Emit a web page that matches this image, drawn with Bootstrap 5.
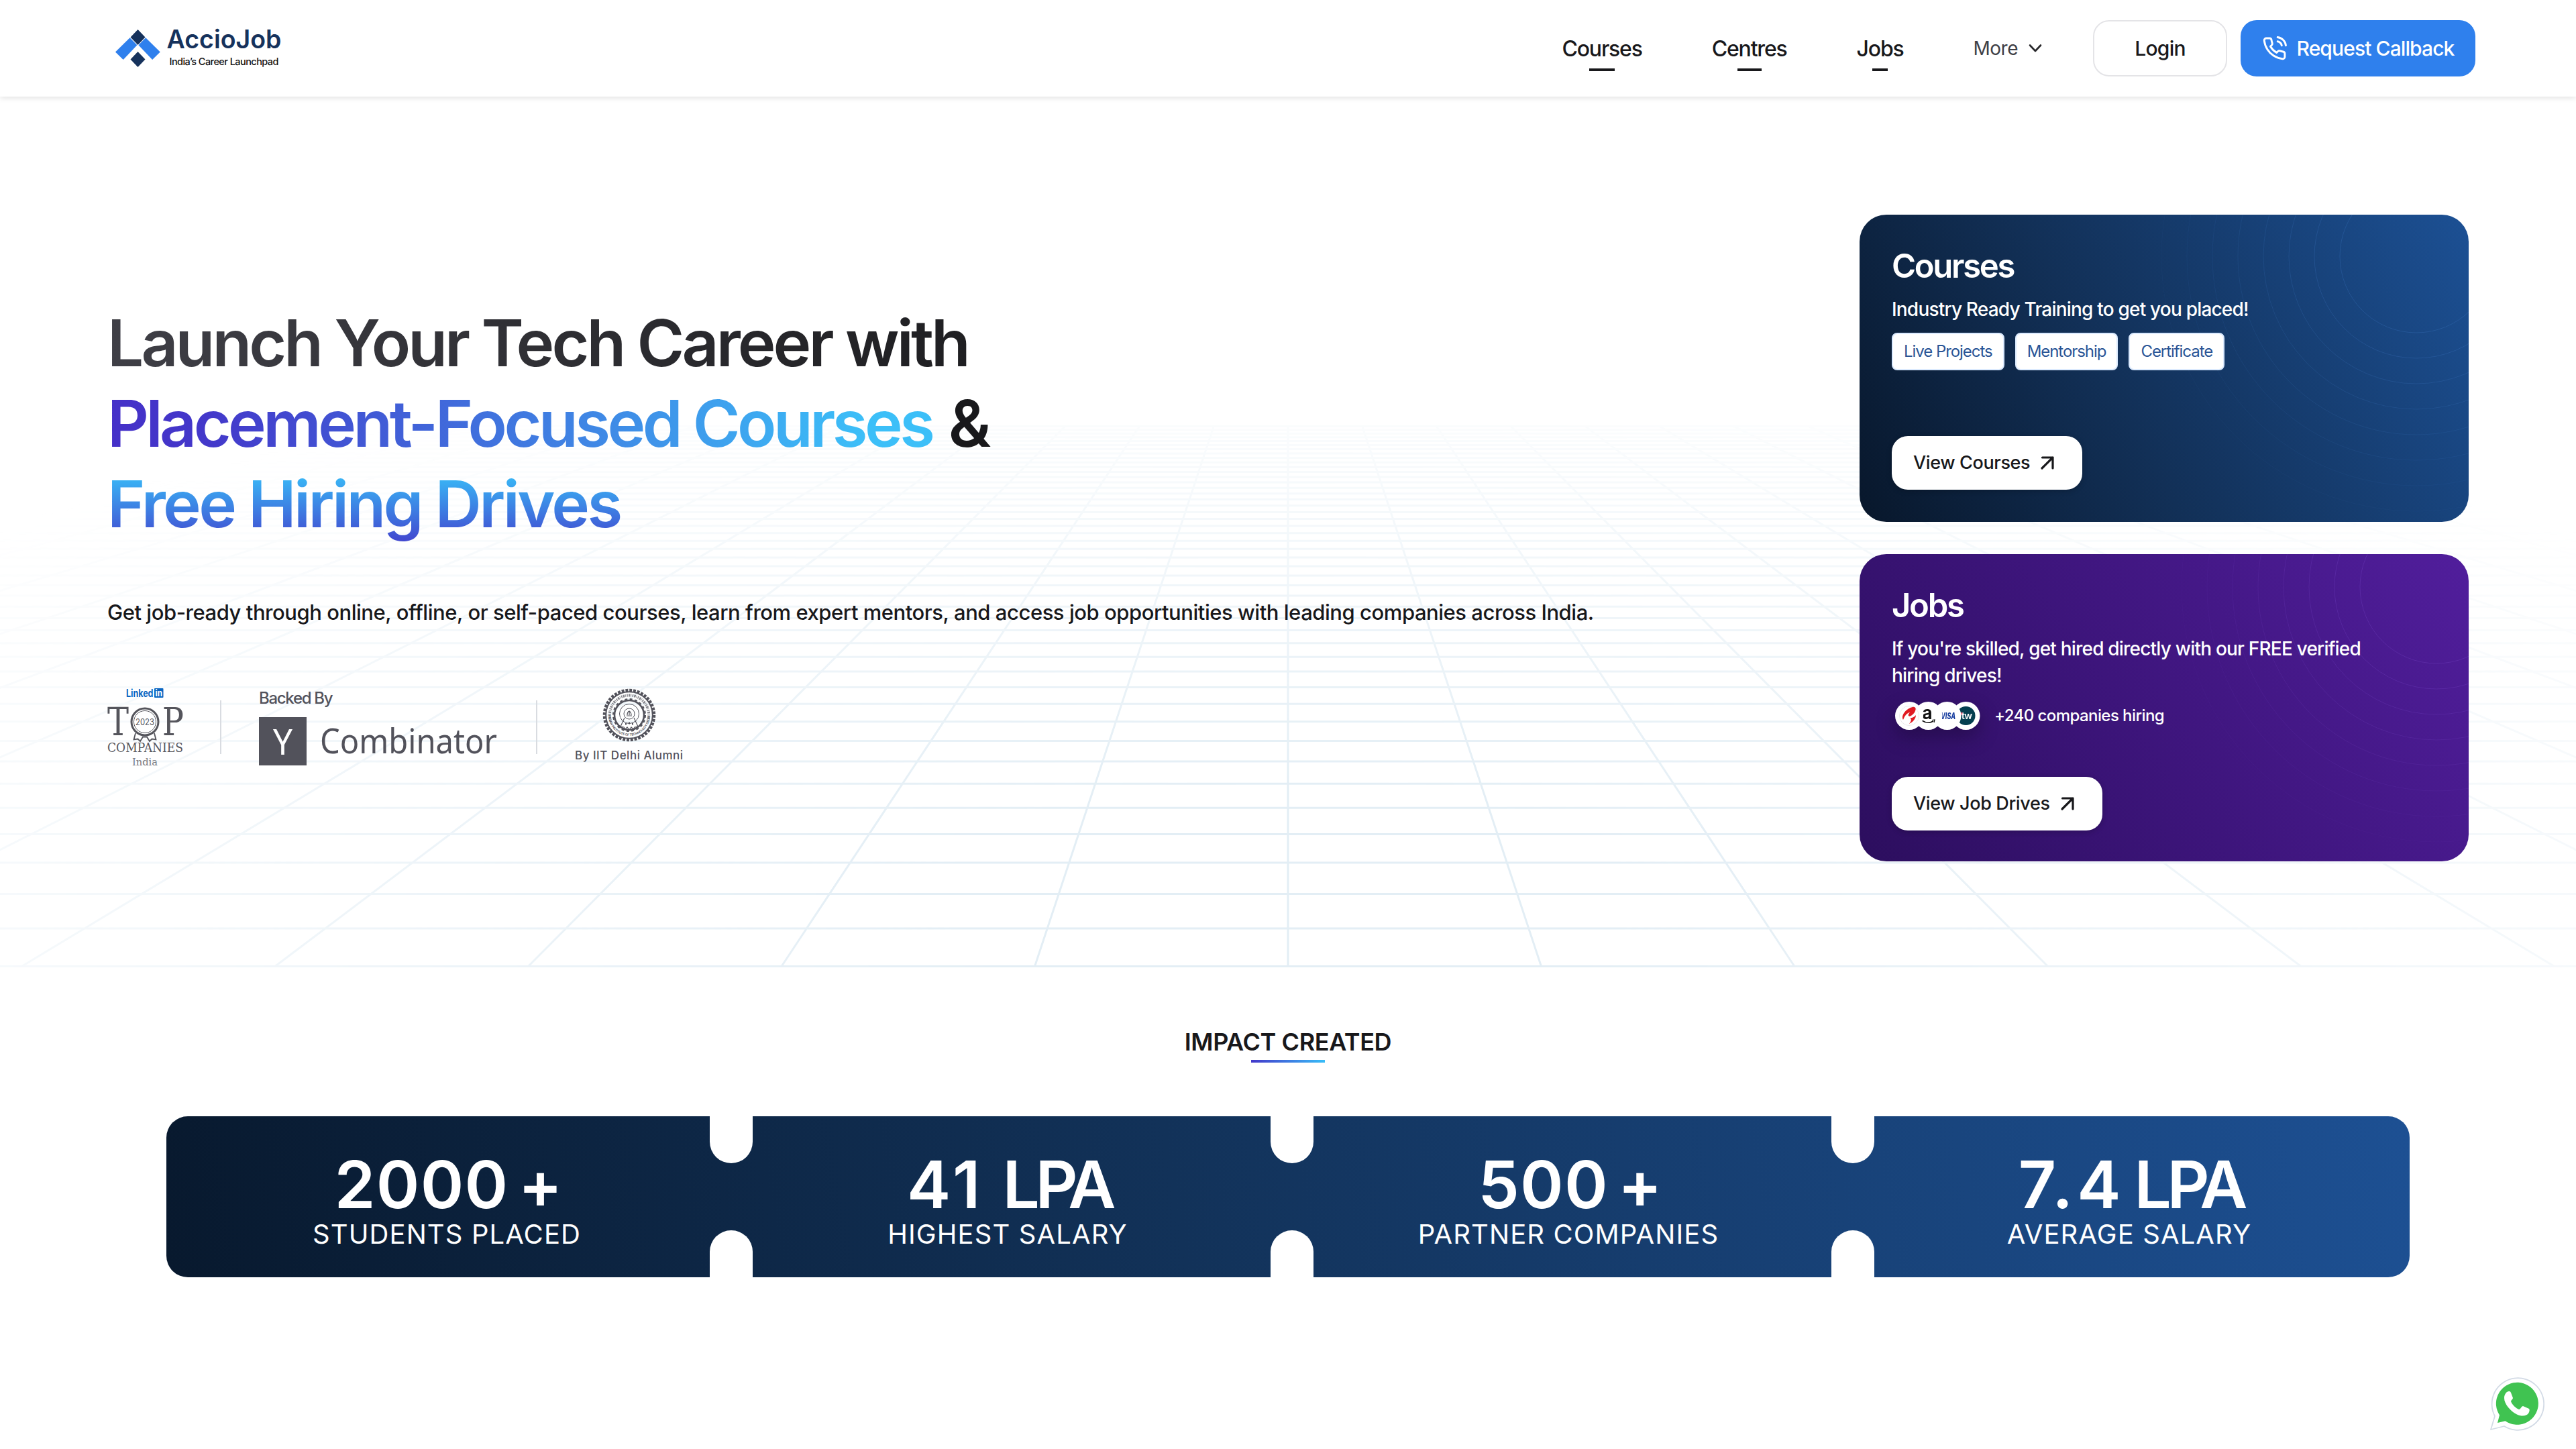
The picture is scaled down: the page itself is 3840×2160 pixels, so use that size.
<!DOCTYPE html>
<html lang="en">
<head>
    <meta charset="UTF-8">
    <meta name="viewport" content="width=device-width, initial-scale=1.0">
    <title>AccioJob</title>
    <link href="https://cdn.jsdelivr.net/npm/bootstrap@5.3.0/dist/css/bootstrap.min.css" rel="stylesheet">
    <style>
        body {
            font-family: Inter, "Liberation Sans", sans-serif;
            color: #18181b;
            background-color: #fff;
            overflow: hidden;
        }

        svg {
            display: block;
            flex-shrink: 0;
            overflow: visible;
        }

        /* header */
        .site-header {
            height: 144px;
            padding: 0 150px 0 172px;
            box-shadow: 0 2px 8px rgba(0, 0, 0, 0.12);
            z-index: 2;
        }

        .menu {
            gap: 104px;
            font-size: 32px;
            font-weight: 500;
            line-height: 48px;
            letter-spacing: -1.2px;
        }

        .menu a {
            color: #18181b;
            text-decoration: none;
            position: relative;
            top: 1px;
        }

        .menu .marked::after {
            content: "";
            position: absolute;
            left: 34%;
            width: 32%;
            top: 53px;
            height: 4px;
            background-color: #18181b;
        }

        .menu .more-link {
            font-size: 28px;
            font-weight: 400;
            letter-spacing: -0.5px;
            color: #3f3f46;
            gap: 16px;
            top: 0;
        }

        .header-btn {
            height: 84px;
            border-radius: 24px;
            font-size: 30px;
            font-weight: 500;
            letter-spacing: -0.8px;
        }

        .login-btn {
            width: 200px;
            margin-left: 76px;
            border: 2px solid #e4e4e7;
        }

        .callback-btn {
            width: 350px;
            margin-left: 20px;
            background-color: #2f80ed;
            color: #fff;
            gap: 15px;
            letter-spacing: -0.9px;
        }

        /* hero */
        .hero {
            height: 1296px;
            padding: 0 160px;
        }

        .hero-grid {
            position: absolute;
            left: 0;
            top: 0;
            overflow: hidden;
            -webkit-mask-image: radial-gradient(ellipse 2600px 820px at 50% 92%, #000 20%, transparent 100%);
            mask-image: radial-gradient(ellipse 2600px 820px at 50% 92%, #000 20%, transparent 100%);
        }

        .hero-left {
            padding-top: 307px;
        }

        .headline {
            font-size: 96px;
            font-weight: 600;
            line-height: 120px;
            white-space: nowrap;
        }

        .headline span {
            -webkit-background-clip: text;
            background-clip: text;
            color: transparent;
        }

        .line-dark {
            letter-spacing: -3.9px;
            background-image: linear-gradient(to right, #3f3f46, #1f1f22);
        }

        .line-courses {
            letter-spacing: -4.5px;
            background-image: linear-gradient(to right, #4530c8 0%, #4338ca 12%, #3cbff8 92%);
        }

        .line-drives {
            letter-spacing: -3.6px;
            background-image: linear-gradient(to bottom, #38bdf8 10%, #4338ca 110%);
        }

        .intro {
            margin-top: 78px;
            font-size: 31px;
            font-weight: 500;
            line-height: 48px;
            letter-spacing: -0.46px;
        }

        .backers {
            margin-top: 87px;
            height: 120px;
            color: #52525b;
        }

        .divider {
            width: 2px;
            height: 80px;
            background-color: #d9dce1;
        }

        .backed-by {
            font-size: 24px;
            font-weight: 500;
            line-height: 28px;
            letter-spacing: -1.3px;
        }

        .by-iit {
            font-size: 17px;
            font-weight: 500;
            line-height: 24px;
            letter-spacing: 0.5px;
        }

        /* promo cards */
        .promos {
            width: 908px;
            padding-top: 176px;
            gap: 48px;
        }

        .promo {
            height: 458px;
            border-radius: 40px;
            padding: 47px 48px 48px;
            color: #fff;
            overflow: hidden;
        }

        .promo-courses {
            background-image: linear-gradient(62deg, #08172b, #123057 42%, #1c5094);
        }

        .promo-jobs {
            background-image: linear-gradient(55deg, #2c0e5e, #3b1478 40%, #511e9c);
            padding-bottom: 46px;
        }

        .promo > :not(.rings) {
            position: relative;
        }

        .rings {
            position: absolute;
            left: 0;
            top: 0;
        }

        .promo h2 {
            font-size: 49px;
            font-weight: 600;
            line-height: 60px;
            letter-spacing: -2.3px;
        }

        .promo-text {
            margin-top: 14px;
            font-size: 28px;
            font-weight: 500;
            line-height: 40px;
            letter-spacing: -0.8px;
        }

        .tag {
            height: 56px;
            border: 2px solid #dbeafe;
            border-radius: 8px;
            background-color: #fff;
            color: #2a5596;
            padding: 0 16px;
            font-size: 24px;
            line-height: 52px;
            letter-spacing: -1.05px;
        }

        .view-btn {
            height: 80px;
            border-radius: 24px;
            padding: 0 42px 0 32px;
            gap: 16px;
            background-color: #fff;
            font-size: 27px;
            font-weight: 500;
            letter-spacing: -0.37px;
            color: #18181b;
            box-shadow: 0 2px 8px rgba(0, 0, 0, 0.2);
        }

        .logos {
            filter: drop-shadow(0 12px 14px rgba(0, 0, 0, 0.25));
        }

        .hiring {
            font-size: 24px;
            font-weight: 500;
            letter-spacing: -0.57px;
        }

        /* impact */
        .impact-title {
            margin-top: 89px;
            font-size: 36px;
            font-weight: 600;
            line-height: 48px;
            letter-spacing: -0.4px;
        }

        .impact-bar {
            width: 110px;
            height: 4px;
            margin-top: 3px;
            background-image: linear-gradient(to right, #4338ca, #38bdf8);
        }

        .ticket {
            width: 3344px;
            height: 240px;
            margin-top: 80px;
            border-radius: 32px;
            color: #fff;
            background-image: linear-gradient(80deg, #08192e, #123259 45%, #1d5093);
        }

        .stat {
            padding-top: 54px;
            position: relative;
        }

        /* white notches cut between neighbouring stats */
        .stat:not(:last-child)::before,
        .stat:not(:last-child)::after {
            content: "";
            position: absolute;
            right: -38px;
            width: 64px;
            height: 70px;
            background-color: #fff;
        }

        .stat::before {
            top: 0;
            border-radius: 0 0 32px 32px;
        }

        .stat::after {
            bottom: 0;
            border-radius: 32px 32px 0 0;
        }

        .stat-value {
            font-size: 98px;
            font-weight: 600;
            line-height: 96px;
            gap: 14px;
            padding-left: 5px;
        }

        .digits {
            letter-spacing: 1.2px;
        }

        .digits-wide {
            letter-spacing: 6px;
        }

        .unit {
            letter-spacing: -6.5px;
        }

        .stat-label {
            margin-top: 1px;
            font-size: 40px;
            line-height: 50px;
            letter-spacing: 1.1px;
        }

        .whatsapp {
            position: fixed;
            left: 3712px;
            top: 2052px;
        }
    </style>
</head>
<body>
<header class="site-header position-relative bg-white d-flex align-items-center">
    <div class="d-flex align-items-center">
        <svg width="250" height="64" viewBox="172 40 250 64">
            <path d="M205.5 44l11 11.5-11 11.5-11-11.5z" fill="#16325c"/>
            <path d="M193.6 56.3l10.8 11L183.7 89 172 77.6z" fill="#2f80ed"/>
            <path d="M217.2 56.3l-10.8 11L227.1 89l11.7-11.4z" fill="#2f80ed"/>
            <path d="M205.5 77l11 11.5-11 11.5-11-11.5z" fill="#16325c"/>
            <text x="248.500" y="72" font-size="38" font-weight="600" fill="#16325c" textLength="171" lengthAdjust="spacingAndGlyphs">AccioJob</text>
            <text x="252.500" y="97.300" font-size="14.500" font-weight="500" fill="#111" textLength="163">India’s Career Launchpad</text>
        </svg>
    </div>
    <nav class="menu d-flex align-items-center ms-auto">
        <a href="#" class="marked">Courses</a>
        <a href="#" class="marked">Centres</a>
        <a href="#" class="marked">Jobs</a>
        <a href="#" class="more-link d-flex align-items-center">More
            <svg width="20" height="14" viewBox="0 0 20 14" fill="none" stroke="#27272a" stroke-width="2.600" stroke-linecap="round" stroke-linejoin="round"><path d="M2 2.500l8 8.500 8-8.500"/></svg>
        </a>
    </nav>
    <div class="header-btn login-btn d-flex align-items-center justify-content-center">Login</div>
    <div class="header-btn callback-btn d-flex align-items-center justify-content-center">
        <svg width="37" height="37" viewBox="0 0 24 24" fill="none" stroke="#fff" stroke-width="1.900" stroke-linecap="round" stroke-linejoin="round"><path d="M15.050 5A5 5 0 0 1 19 8.950M15.050 1A9 9 0 0 1 23 8.940m-1 7.980v3a2 2 0 0 1-2.180 2 19.790 19.790 0 0 1-8.630-3.070 19.500 19.500 0 0 1-6-6 19.790 19.790 0 0 1-3.070-8.670A2 2 0 0 1 4.110 2h3a2 2 0 0 1 2 1.720c.127.960.361 1.903.7 2.810a2 2 0 0 1-.45 2.110L8.090 9.910a16 16 0 0 0 6 6l1.270-1.270a2 2 0 0 1 2.110-.45c.907.339 1.850.573 2.810.7A2 2 0 0 1 22 16.920z"/></svg>
        <span>Request Callback</span>
    </div>
</header>

<section class="hero position-relative d-flex justify-content-between">
    <svg class="hero-grid" width="3840" height="1298" viewBox="0 0 3840 1298"><path id="gridLines" fill="none" stroke="#e3eef5" stroke-width="3"/></svg>

    <div class="hero-left position-relative">
        <h1 class="headline mb-0">
            <span class="line-dark">Launch Your Tech Career with</span><br>
            <span class="line-courses">Placement-Focused Courses</span> &amp;<br>
            <span class="line-drives">Free Hiring Drives</span>
        </h1>
        <p class="intro mb-0">Get job-ready through online, offline, or self-paced courses, learn from expert mentors, and access job opportunities with leading companies across India.</p>

        <div class="backers d-flex align-items-center">
            <svg width="114" height="120" viewBox="0 0 114 120" fill="#55555c" font-family="DejaVu Serif, serif">
                <text x="28" y="14.500" font-family="Inter, sans-serif" font-size="16" font-weight="700" fill="#0a66c2" textLength="40.500" lengthAdjust="spacingAndGlyphs">Linked</text>
                <rect x="70" y="2" width="13.500" height="14" rx="1" fill="#0a66c2"/>
                <text x="71.500" y="13.500" font-family="Inter, sans-serif" font-size="13" font-weight="700" fill="#fff" textLength="10.500" lengthAdjust="spacingAndGlyphs">in</text>
                <text x="0" y="72" font-size="58" textLength="32" lengthAdjust="spacingAndGlyphs">T</text>
                <text x="82" y="72" font-size="58" textLength="32" lengthAdjust="spacingAndGlyphs">P</text>
                <path d="M42 69l-2.500 9.500 6-1 3.500 3.500 4-6.500h6l4 6.500 3.500-3.500 6 1-2.500-9.500" fill="none" stroke="#55555c" stroke-width="1.800"/>
                <circle cx="56" cy="52" r="20" fill="#fff" stroke="#55555c" stroke-width="3"/>
                <circle cx="56" cy="52" r="16.500" fill="none" stroke="#55555c" stroke-width="1"/>
                <text x="42" y="57" font-family="Inter, sans-serif" font-size="13.500" textLength="28" lengthAdjust="spacingAndGlyphs">2023</text>
                <text x="0" y="97.300" font-size="18" textLength="113" lengthAdjust="spacingAndGlyphs">COMPANIES</text>
                <text x="37" y="117.300" font-size="15" textLength="38" lengthAdjust="spacingAndGlyphs" fill="#77777e">India</text>
            </svg>
            <div class="divider" style="margin-left: 54px; margin-right: 56px"></div>
            <div>
                <div class="backed-by">Backed By</div>
                <svg width="356" height="73" viewBox="0 0 356 73" style="margin-top: 14px" font-family="Noto Sans, sans-serif">
                    <rect width="71" height="72" fill="#52525b"/>
                    <text x="21" y="55.500" font-size="52" fill="#fff" textLength="29" lengthAdjust="spacingAndGlyphs">Y</text>
                    <text x="91" y="54" font-size="51" fill="#52525b" textLength="264" lengthAdjust="spacingAndGlyphs">Combinator</text>
                </svg>
            </div>
            <div class="divider" style="margin-left: 57px; margin-right: 56px"></div>
            <div class="d-flex flex-column align-items-center" style="margin-bottom: 6px">
                <svg width="84" height="84" viewBox="-42 -42 84 84" fill="none" stroke="#52525b">
                    <circle r="37" stroke-width="4.500" stroke-dasharray="3.900 1.910"/>
                    <circle r="34.800" stroke-width="2"/>
                    <path d="M-28 8A29.200 29.200 0 1 1 28 8" stroke-width="4" stroke-dasharray="1.500 1.200 2.500 1 .800 1.400" stroke-opacity=".7"/>
                    <path id="sealRing" d="M-31 0A31 31 0 0 0 31 0" stroke="none"/>
                    <text font-size="4.800" font-weight="600" fill="#52525b" stroke="none"><textPath href="#sealRing" textLength="96">INDIAN INSTITUTE OF TECHNOLOGY DELHI</textPath></text>
                    <circle r="22" stroke-width="2.600"/>
                    <circle r="24" stroke-width="2" stroke-dasharray="4 3.540"/>
                    <circle r="14.500" cy="-2" stroke-width="1"/>
                    <circle r="8" cy="-2" stroke-width="1"/>
                    <path d="M-4 1h8M0 -6v6M-3 0q0-5 3-6q3 2 3 6M-7 4l-6 13 5 1 2 3 3-3 3 4 3-4 3 3 2-3 5-1-6-13" stroke-width="1.200"/>
                    <path d="M-6 13h2M-1 12h2M4 13h2" stroke-width="3"/>
                </svg>
                <div class="by-iit" style="margin-top: 6px">By IIT Delhi Alumni</div>
            </div>
        </div>
    </div>

    <div class="promos position-relative d-flex flex-column">
        <div class="promo promo-courses position-relative d-flex flex-column align-items-start">
            <svg class="rings" data-cx="830" data-cy="62" width="908" height="458" fill="none" stroke="#5b9af0"></svg>
            <h2 class="mb-0">Courses</h2>
            <p class="promo-text mb-0">Industry Ready Training to get you placed!</p>
            <div class="d-flex" style="gap: 16px; margin-top: 15px">
                <span class="tag">Live Projects</span>
                <span class="tag">Mentorship</span>
                <span class="tag">Certificate</span>
            </div>
            <div class="view-btn d-flex align-items-center mt-auto">View Courses
                <svg width="20" height="20" viewBox="0 0 20 20" fill="none" stroke="#18181b" stroke-width="3.200" stroke-linecap="round" stroke-linejoin="round"><path d="M2.500 2h15.500v16M18 2L2 18"/></svg>
            </div>
        </div>

        <div class="promo promo-jobs position-relative d-flex flex-column align-items-start">
            <svg class="rings" data-cx="860" data-cy="49" width="908" height="458" fill="none" stroke="#9a6cf0"></svg>
            <h2 class="mb-0">Jobs</h2>
            <p class="promo-text mb-0">If you're skilled, get hired directly with our FREE verified<br>hiring drives!</p>
            <div class="d-flex align-items-center" style="margin: 19px 0 0 5px; gap: 21px">
                <svg class="logos" width="127" height="42" viewBox="0 0 127 42">
                    <circle cx="105.500" cy="21" r="21" fill="#fff"/>
                    <circle cx="105.500" cy="21" r="14" fill="#043f4f"/>
                    <text x="99" y="26" font-size="14" font-weight="600" fill="#fff" textLength="16">tw</text>
                    <path d="M97 21l3-5" stroke="#f2617a" stroke-width="2"/>
                    <circle cx="77.500" cy="21" r="21" fill="#fff"/>
                    <text x="68" y="25.500" font-size="12.500" font-weight="800" font-style="italic" fill="#1a3fa0" textLength="22" lengthAdjust="spacingAndGlyphs">VISA</text>
                    <circle cx="49.500" cy="21" r="21" fill="#fff"/>
                    <text x="40.500" y="25.500" font-size="26" font-weight="700" fill="#111" textLength="15" lengthAdjust="spacingAndGlyphs">a</text>
                    <path d="M40 28q9 6 17 1" fill="none" stroke="#111" stroke-width="1.600"/>
                    <path d="M55 27.500l4-.5-1 4" fill="none" stroke="#111" stroke-width="1.200"/>
                    <circle cx="21" cy="21" r="21" fill="#fff"/>
                    <circle cx="21" cy="21" r="14.500" fill="none" stroke="#ececec"/>
                    <path d="M12 27c-4-7 5-17 14-19 5-1 6 3 3 8-3 4-7 7-9 5-1-1 0-3 2-5-5 1-8 6-10 11z" fill="#e11b22"/>
                    <path d="M22 24c4 1 7-2 9-4 0 5-4 10-10 13 3-4 4-7 1-9z" fill="#e11b22"/>
                </svg>
                <span class="hiring">+240 companies hiring</span>
            </div>
            <div class="view-btn d-flex align-items-center mt-auto">View Job Drives
                <svg width="20" height="20" viewBox="0 0 20 20" fill="none" stroke="#18181b" stroke-width="3.200" stroke-linecap="round" stroke-linejoin="round"><path d="M2.500 2h15.500v16M18 2L2 18"/></svg>
            </div>
        </div>
    </div>
</section>

<section class="d-flex flex-column align-items-center">
    <h3 class="impact-title mb-0">IMPACT CREATED</h3>
    <div class="impact-bar"></div>
    <div class="ticket row g-0 text-center">
        <div class="stat col-3">
            <div class="stat-value d-flex justify-content-center"><span class="digits">2000</span><span>+</span></div>
            <div class="stat-label">STUDENTS PLACED</div>
        </div>
        <div class="stat col-3">
            <div class="stat-value d-flex justify-content-center" style="gap: 27px"><span class="digits-wide">41</span><span class="unit">LPA</span></div>
            <div class="stat-label">HIGHEST SALARY</div>
        </div>
        <div class="stat col-3">
            <div class="stat-value d-flex justify-content-center"><span class="digits">500</span><span>+</span></div>
            <div class="stat-label">PARTNER COMPANIES</div>
        </div>
        <div class="stat col-3">
            <div class="stat-value d-flex justify-content-center"><span class="digits-wide">7.4</span><span class="unit">LPA</span></div>
            <div class="stat-label">AVERAGE SALARY</div>
        </div>
    </div>
</section>

<a href="#" class="whatsapp">
    <svg width="80" height="80" viewBox="0 0 80 80">
        <path d="M1 79L7 59A38.800 38.800 0 1 1 21 74z" fill="#fff" stroke="#d3dbe6" stroke-width="1.800" stroke-linejoin="round"/>
        <path d="M11 69l3-11.500A31.500 31.500 0 1 1 22.500 66.200z" fill="#40c351"/>
        <path d="M28 22c-3 0-7 4-7 10 0 9 9 19 18 24 8 4 15 3 18-1 2-3 2-6 1-7l-9-4c-2 0-4 5-6 5-4-1-11-8-12-12 0-2 3-3 3-5l-3-8c-1-2-2-2-3-2z" fill="#fff"/>
    </svg>
</a>

<script src="https://cdn.jsdelivr.net/npm/bootstrap@5.3.0/dist/js/bootstrap.bundle.min.js"></script>
<script>
    // perspective floor: vanishing point (1920, horizon), nearest row at floor
    const horizon = 157;
    const floor = 1296.5;
    const depth = floor - horizon;
    const topY = horizon + depth / (1 + 0.0523 * 46);
    let d = '';
    for (let n = 0; n <= 46; n++) {
        const y = horizon + depth / (1 + 0.0523 * n);
        d += `M0 ${y.toFixed(1)}H3840`;
    }
    for (let i = -20; i <= 20; i++) {
        const step = 377.5 * i;
        const far = 1920 + step * (topY - horizon) / depth;
        d += `M${1920 + step} ${floor}L${far.toFixed(1)} ${topY.toFixed(1)}`;
    }
    document.getElementById('gridLines').setAttribute('d', d);

    // fading rings in the card corners
    document.querySelectorAll('.rings').forEach(svg => {
        let html = '';
        for (let i = 0; i < 8; i++) {
            html += `<circle cx="${svg.dataset.cx}" cy="${svg.dataset.cy}" r="${114 + i * 38}" stroke-opacity="${(0.18 - i * 0.02).toFixed(2)}"/>`;
        }
        svg.innerHTML = html;
    });
</script>
</body>
</html>
